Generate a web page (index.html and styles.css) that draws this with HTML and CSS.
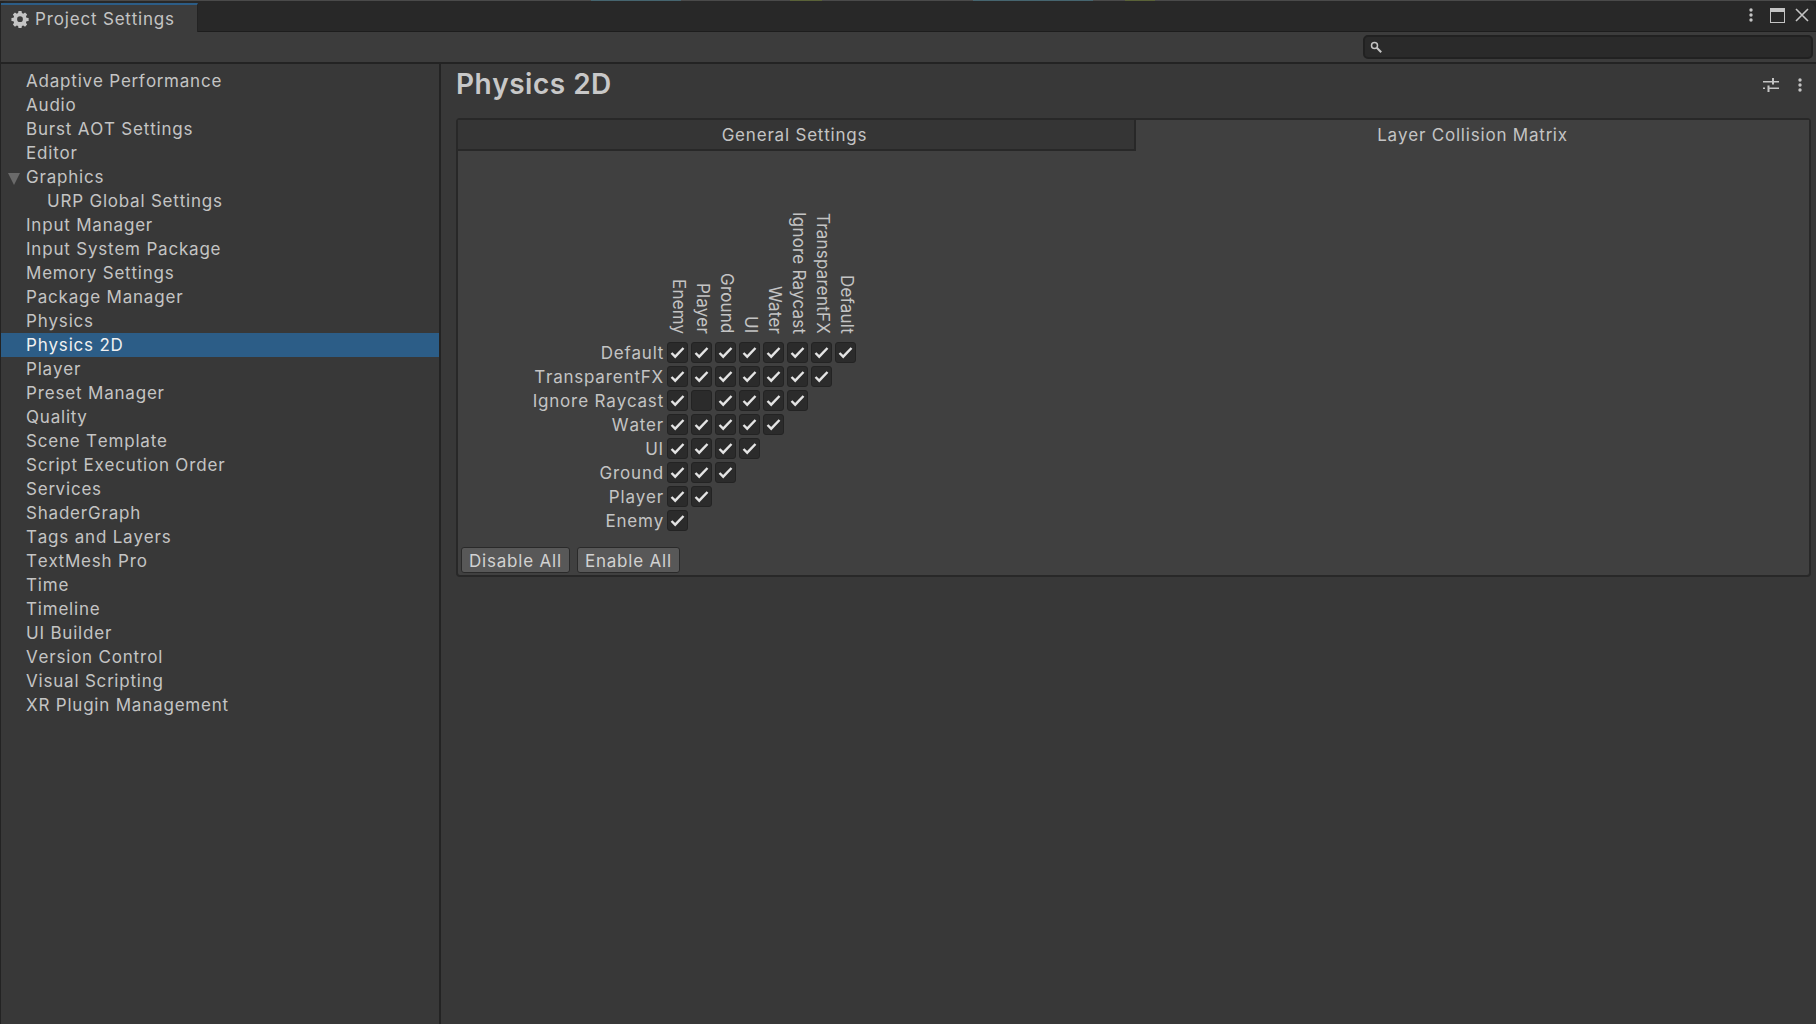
FILE: index.html
```html
<!DOCTYPE html>
<html lang="en">
<head>
  <meta charset="UTF-8">
  <meta name="viewport" content="width=device-width, initial-scale=1.0">
  <title>Project Settings</title>
  <link rel="stylesheet" href="styles.css">
</head>
<body>
  <div class="window">
    <div class="titlebar">
      <div class="window-tab">
        <svg class="gear" width="18" height="18" viewBox="0 0 20 20"><path fill="#c4c4c4" fill-rule="evenodd" d="M8.3 1h3.4l.4 2.4 1.5.7 2-1.4 2.3 2.4-1.3 2 .6 1.500 2.400.4v3.200l-2.400.4-.6 1.500 1.300 2-2.300 2.400-2-1.400-1.500.7-.4 2.100H8.300l-.4-2.100-1.500-.7-2 1.400-2.300-2.400 1.300-2-.6-1.500-2.300-.4V9l2.300-.4.6-1.500-1.300-2 2.300-2.400 2 1.400 1.500-.7zM10 7a3.200 3.200 0 1 0 0 6.400a3.200 3.200 0 0 0 0-6.400z"/></svg>
        <span>Project Settings</span>
      </div>
      <div class="window-actions">
        <svg class="action-more" width="4" height="14" viewBox="0 0 4 14"><g fill="#c4c4c4"><circle cx="2" cy="2" r="1.700"/><circle cx="2" cy="7" r="1.700"/><circle cx="2" cy="12" r="1.700"/></g></svg>
        <svg width="15" height="15" viewBox="0 0 15 15"><path fill="#c4c4c4" fill-rule="evenodd" d="M0 0h15v15H0zM1 4v10h13V4z"/></svg>
        <svg width="14" height="14" viewBox="0 0 14 14"><path stroke="#c4c4c4" stroke-width="1.600" d="M1 1l12 12M13 1L1 13"/></svg>
      </div>
    </div>

    <div class="toolbar">
      <div class="search">
        <svg width="12" height="12" viewBox="0 0 12 12"><circle cx="4.500" cy="4.500" r="3" fill="none" stroke="#c4c4c4" stroke-width="1.500"/><path stroke="#c4c4c4" stroke-width="2" d="M6.800 6.800l4.400 4.400"/></svg>
      </div>
    </div>

    <div class="main">
      <ul class="sidebar">
        <li>Adaptive Performance</li>
        <li>Audio</li>
        <li>Burst AOT Settings</li>
        <li>Editor</li>
        <li class="has-arrow">Graphics</li>
        <li class="child">URP Global Settings</li>
        <li>Input Manager</li>
        <li>Input System Package</li>
        <li>Memory Settings</li>
        <li>Package Manager</li>
        <li>Physics</li>
        <li class="selected">Physics 2D</li>
        <li>Player</li>
        <li>Preset Manager</li>
        <li>Quality</li>
        <li>Scene Template</li>
        <li>Script Execution Order</li>
        <li>Services</li>
        <li>ShaderGraph</li>
        <li>Tags and Layers</li>
        <li>TextMesh Pro</li>
        <li>Time</li>
        <li>Timeline</li>
        <li>UI Builder</li>
        <li>Version Control</li>
        <li>Visual Scripting</li>
        <li>XR Plugin Management</li>
      </ul>

      <div class="content">
        <div class="content-head">
          <h1>Physics 2D</h1>
          <div class="head-icons">
            <svg width="16" height="14" viewBox="0 0 16 14"><g stroke="#c4c4c4" fill="none"><path stroke-width="1.400" d="M0 3.700h16M0 10.300h2M5 10.300h11"/><path stroke-width="2" d="M10 0v6.500M5.500 7.500v6.500"/></g></svg>
            <svg width="4" height="14" viewBox="0 0 4 14"><g fill="#c4c4c4"><circle cx="2" cy="2" r="1.700"/><circle cx="2" cy="7" r="1.700"/><circle cx="2" cy="12" r="1.700"/></g></svg>
          </div>
        </div>

        <div class="box">
          <div class="tabs">
            <div class="tab">General Settings</div>
            <div class="tab active">Layer Collision Matrix</div>
          </div>
          <div class="box-body">
            <div class="col-labels">
              <span>Enemy</span><span>Player</span><span>Ground</span><span>UI</span><span>Water</span><span>Ignore Raycast</span><span>TransparentFX</span><span>Default</span>
            </div>
            <div class="matrix" id="matrix"></div>
            <div class="buttons">
              <button>Disable All</button>
              <button>Enable All</button>
            </div>
          </div>
        </div>
      </div>
    </div>
  </div>

  <script>
    const layers = ["Default", "TransparentFX", "Ignore Raycast", "Water", "UI", "Ground", "Player", "Enemy"];
    const matrix = document.getElementById("matrix");
    const check = '<svg width="15" height="13" viewBox="0 0 15 13"><path fill="none" stroke="#e4e4e4" stroke-width="2.400" d="M1.500 7l3.700 3.700L13.500 2"/></svg>';

    layers.forEach((name, i) => {
      const row = document.createElement("div");
      row.className = "matrix-row";
      let cells = "";
      for (let c = 0; c < 8 - i; c++) {
        // Ignore Raycast vs Player is the only pair switched off
        const off = i === 2 && c === 1;
        cells += `<span class="cell">${off ? "" : check}</span>`;
      }
      row.innerHTML = `<label>${name}</label>${cells}`;
      matrix.appendChild(row);
    });
  </script>
</body>
</html>
```
FILE: styles.css
```css
* {
  box-sizing: border-box;
}

html, body {
  height: 100%;
  margin: 0;
  overflow: hidden;
}

body {
  background: #2b2b2b;
  color: #c4c4c4;
  font-family: Inter, "Liberation Sans", sans-serif;
  font-size: 17px;
  font-kerning: none;
  letter-spacing: 0.8px;
}

.window {
  display: flex;
  flex-direction: column;
  height: 100%;
  padding-left: 1px;
  padding-top: 1px;
  /* other editor windows peeking out along the top edge */
  background: linear-gradient(90deg, #4a4a4a 591px, #46656f 591px, #46656f 681px, #4a4a4a 681px, #4a4a4a 790px, #5a6238 790px, #5a6238 822px, #4a4a4a 822px, #4a4a4a 973px, #46656f 973px, #46656f 1093px, #4a4a4a 1093px, #4a4a4a 1125px, #5a6238 1125px, #5a6238 1155px, #4a4a4a 1155px) top / 100% 1px no-repeat, #232323;
}

.titlebar {
  display: flex;
  justify-content: space-between;
  height: 31px;
  padding-top: 2px;
  background: #282828;
  border-top-left-radius: 6px;
  border-top-right-radius: 10px;
  border-bottom: 1px solid #1d1d1d;
  flex: none;
}

.window-tab {
  display: flex;
  align-items: center;
  gap: 6px;
  width: 197px;
  padding-left: 10px;
  background: #3c3c3c;
  border-top: 2px solid #2c5d87;
  border-right: 1px solid #232323;
  margin-bottom: -1px;
}

.window-actions {
  display: flex;
  align-items: center;
  gap: 10px;
  padding: 0 7px 4px 0;
}

.action-more {
  margin-right: 7px;
}

.toolbar {
  display: flex;
  justify-content: flex-end;
  align-items: center;
  height: 32px;
  padding: 0 3px 0 0;
  background: #3c3c3c;
  border-bottom: 2px solid #232323;
  flex: none;
}

.search {
  display: flex;
  align-items: center;
  width: 450px;
  height: 24px;
  padding-left: 5px;
  background: #2a2a2a;
  border: 2px solid #212121;
  border-radius: 5px;
}

.main {
  display: flex;
  flex: 1;
  min-height: 0;
  background: #383838;
}

.sidebar {
  width: 440px;
  margin: 0;
  padding: 5px 0 0 0;
  list-style: none;
  border-right: 2px solid #232323;
  flex: none;
}

.sidebar li {
  height: 24px;
  line-height: 24px;
  padding-left: 25px;
}

.sidebar li.child {
  padding-left: 46px;
}

.sidebar li.has-arrow {
  position: relative;
}

.sidebar li.has-arrow::before {
  content: "";
  position: absolute;
  left: 7px;
  top: 8px;
  border-left: 6.500px solid transparent;
  border-right: 6.500px solid transparent;
  border-top: 12px solid #6a6a6a;
}

.sidebar li.selected {
  background: #2c5d87;
  color: #f0f0f0;
}

.content {
  flex: 1;
  min-width: 0;
  padding: 0 5px 0 15px;
}

.content-head {
  display: flex;
  justify-content: space-between;
  align-items: flex-start;
  height: 54px;
  padding-top: 3px;
}

h1 {
  margin: 0;
  color: #c8c8c8;
  font-size: 28px;
  font-weight: 600;
  letter-spacing: 0.5px;
  line-height: 34px;
}

.head-icons {
  display: flex;
  align-items: center;
  gap: 19px;
  padding: 11px 9px 0 0;
}

.box {
  height: 459px;
  background: #404040;
  border: 2px solid #282828;
  border-radius: 4px;
}

.tabs {
  display: flex;
  height: 31px;
}

.tab {
  display: flex;
  align-items: center;
  justify-content: center;
  flex: 1;
  padding-right: 3px;
  background: #353535;
  border-right: 2px solid #282828;
  border-bottom: 2px solid #282828;
}

.tab.active {
  flex: 0 0 673px;
  padding: 0 0 2px 0;
  background: #404040;
  border: 0;
}

.box-body {
  padding: 0 0 0 3px;
}

.col-labels {
  display: flex;
  align-items: flex-end;
  height: 183px;
  padding-left: 206px;
}

.col-labels span {
  width: 24px;
  line-height: 24px;
  writing-mode: vertical-rl;
  font-kerning: normal;
  letter-spacing: 0.2px;
}

.matrix {
  margin-top: 8px;
}

.matrix-row {
  display: flex;
  align-items: flex-start;
  gap: 3px;
  height: 24px;
}

.matrix-row label {
  width: 203px;
  line-height: 23px;
  text-align: right;
}

.cell {
  display: flex;
  align-items: center;
  justify-content: center;
  width: 21px;
  height: 21px;
  background: #2b2b2b;
  border: 1px solid #232323;
  border-radius: 3px;
}

.buttons {
  display: flex;
  gap: 7px;
  margin-top: 13px;
}

button {
  height: 26px;
  padding: 1px 7px 0;
  background: #585858;
  color: #d2d2d2;
  font-family: inherit;
  font-size: 17px;
  font-kerning: none;
  letter-spacing: 0.8px;
  border: 1px solid #2a2a2a;
  border-radius: 3px;
}
```
